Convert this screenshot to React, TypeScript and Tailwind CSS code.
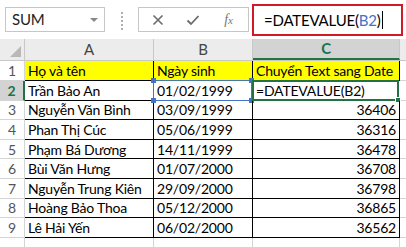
import React from 'react';

const rows = [
  { n: 2, name: 'Trần Bảo An', date: '01/02/1999', value: '' },
  { n: 3, name: 'Nguyễn Văn Bình', date: '03/09/1999', value: '36406' },
  { n: 4, name: 'Phan Thị Cúc', date: '05/06/1999', value: '36316' },
  { n: 5, name: 'Phạm Bá Dương', date: '14/11/1999', value: '36478' },
  { n: 6, name: 'Bùi Văn Hưng', date: '01/07/2000', value: '36708' },
  { n: 7, name: 'Nguyễn Trung Kiên', date: '29/09/2000', value: '36798' },
  { n: 8, name: 'Hoàng Bảo Thoa', date: '05/12/2000', value: '36865' },
  { n: 9, name: 'Lê Hải Yến', date: '06/02/2000', value: '36562' },
];

const font = { fontFamily: 'Lato, "Noto Sans", sans-serif' };

function Handle({ className }: { className: string }) {
  return <span className={`absolute w-[5px] h-[5px] ${className}`} />;
}

export default function App() {
  return (
    <div className="w-[406px] h-[247px] bg-white overflow-hidden text-[14px] tracking-[-0.2px] text-black" style={font}>
      {/* formula bar */}
      <div className="h-[39px] flex items-start">
        <div className="mt-[7px] ml-[5px] w-[100px] h-[25px] border border-[#c6c6c6] flex items-center pl-[6px] pr-[6px]">
          <span className="flex-1 text-[15px] text-[#222]">SUM</span>
          <span className="w-0 h-0 border-l-[4px] border-r-[4px] border-t-[4px] border-l-transparent border-r-transparent border-t-[#888]" />
        </div>
        <div className="mt-[12px] ml-[16px] flex flex-col gap-[2px]">
          {[0, 1, 2, 3, 4].map((i) => (
            <span key={i} className="w-[2px] h-[2px] bg-[#b0b0b0]" />
          ))}
        </div>
        <div className="mt-[7px] ml-[15px] w-[111px] h-[25px] border border-[#c6c6c6] flex items-center">
          <span className="w-[38px] flex justify-center">
            <svg width="12" height="12" viewBox="0 0 12 12">
              <path d="M1.5 1.5 L10.5 10.5 M10.5 1.5 L1.5 10.5" stroke="#6b6b6b" strokeWidth="1.6" />
            </svg>
          </span>
          <span className="w-[32px] flex justify-center">
            <svg width="14" height="12" viewBox="0 0 14 12">
              <path d="M1.5 6.5 L5 10 L12.5 2" stroke="#6b6b6b" strokeWidth="1.8" fill="none" />
            </svg>
          </span>
          <span className="flex-1 text-center text-[14px] italic text-[#777]" style={{ fontFamily: '"Liberation Serif", serif' }}>
            f<span className="text-[11px]">x</span>
          </span>
        </div>
        <div className="mt-[4px] ml-[3px] w-[151px] h-[32px] border-2 border-[#d11a26] flex items-center pl-[10px]">
          <span className="text-[15px]">=DATEVALUE(</span>
          <span className="text-[15px] text-[#4472c4]">B2</span>
          <span className="text-[15px]">)</span>
          <span className="ml-[1px] w-[1px] h-[18px] bg-black" />
        </div>
      </div>

      {/* column headers */}
      <div className="flex h-[22px] bg-[#ececec] border-b border-[#c8c8c8]">
        <div className="w-[25px] border-r border-[#c8c8c8] relative">
          <span className="absolute right-[3px] bottom-[3px] w-0 h-0 border-l-[11px] border-t-[11px] border-l-transparent border-t-transparent border-b-0 border-r-0" style={{ borderBottom: '11px solid #b8b8b8', borderLeftWidth: 11 }} />
        </div>
        <div className="w-[129px] border-r border-[#c8c8c8] flex items-center justify-center text-[#444] text-[15px]">A</div>
        <div className="w-[99px] border-r border-[#c8c8c8] flex items-center justify-center text-[#444] text-[15px]">B</div>
        <div className="w-[147px] bg-[#d3d3d3] border-b-2 border-[#217346] border-r border-r-[#c8c8c8] flex items-center justify-center text-[#217346] font-bold text-[15px]">C</div>
        <div className="flex-1" />
      </div>

      {/* row 1 */}
      <div className="flex h-[20px]">
        <div className="w-[25px] bg-white border-r border-b border-[#d4d4d4] flex items-center justify-center text-[#555]">1</div>
        <div className="w-[129px] bg-[#ffff00] border-r border-b border-black pl-[3px] flex items-center">Họ và tên</div>
        <div className="w-[99px] bg-[#ffff00] border-r border-b border-black pl-[3px] flex items-center">Ngày sinh</div>
        <div className="w-[147px] bg-[#ffff00] border-r border-b border-black pl-[3px] flex items-center whitespace-nowrap">Chuyển Text sang Date</div>
        <div className="flex-1 border-b border-[#d4d4d4]" />
      </div>

      {rows.map((r) => {
        const active = r.n === 2;
        return (
          <div key={r.n} className="flex h-[19.6px]">
            <div
              className={`w-[25px] border-r border-b flex items-center justify-center ${
                active ? 'bg-[#d3d3d3] text-[#217346] font-bold border-r-[#217346] border-r-2 border-b-[#d4d4d4]' : 'bg-white text-[#555] border-[#d4d4d4]'
              }`}
            >
              {r.n}
            </div>
            <div className="w-[129px] border-r border-b border-black pl-[3px] flex items-center whitespace-nowrap">{r.name}</div>
            <div
              className={`w-[99px] border-b pl-[3px] flex items-center relative ${
                active ? 'border-r border-[#4472c4] border-l border-t -ml-[1px] -mt-[1px] pt-[1px]' : 'border-r border-black'
              }`}
            >
              {r.date}
              {active && (
                <>
                  <Handle className="bg-[#4472c4] -left-[3px] -top-[3px]" />
                  <Handle className="bg-[#4472c4] -right-[3px] -top-[3px]" />
                  <Handle className="bg-[#4472c4] -left-[3px] -bottom-[3px]" />
                  <Handle className="bg-[#4472c4] -right-[3px] -bottom-[3px]" />
                </>
              )}
            </div>
            <div
              className={`w-[147px] flex items-center relative ${
                active ? 'border-2 border-[#217346] -mt-[1px] h-[21px] pl-[2px]' : 'border-r border-b border-black justify-end pr-[3px]'
              }`}
            >
              {active ? '=DATEVALUE(B2)' : r.value}
              {active && <Handle className="bg-[#217346] -right-[4px] -bottom-[4px] border border-white w-[6px] h-[6px]" />}
            </div>
            <div className="flex-1 border-b border-[#d4d4d4]" />
          </div>
        );
      })}

      {/* row 10 partial */}
      <div className="flex h-[20px]">
        <div className="w-[25px] border-r border-[#d4d4d4]" />
        <div className="w-[129px] border-r border-[#d4d4d4]" />
        <div className="w-[99px] border-r border-[#d4d4d4]" />
        <div className="w-[147px] border-r border-[#d4d4d4]" />
      </div>
    </div>
  );
}
